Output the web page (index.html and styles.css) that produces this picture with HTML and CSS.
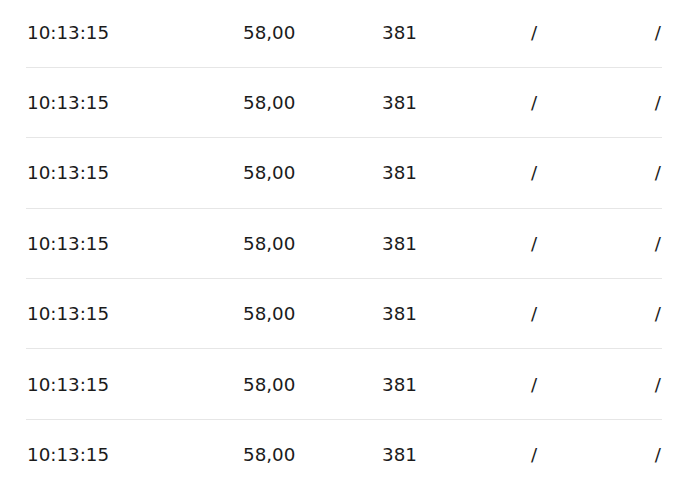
FILE: index.html
```html
<!DOCTYPE html>
<html>
<head>
<meta charset="utf-8">
<link rel="stylesheet" href="styles.css">
</head>
<body>
<div class="table">
  <div class="row"><span class="c time">10:13:15</span><span class="c price">58,00</span><span class="c qty">381</span><span class="c a">/</span><span class="c b">/</span></div>
  <div class="row"><span class="c time">10:13:15</span><span class="c price">58,00</span><span class="c qty">381</span><span class="c a">/</span><span class="c b">/</span></div>
  <div class="row"><span class="c time">10:13:15</span><span class="c price">58,00</span><span class="c qty">381</span><span class="c a">/</span><span class="c b">/</span></div>
  <div class="row"><span class="c time">10:13:15</span><span class="c price">58,00</span><span class="c qty">381</span><span class="c a">/</span><span class="c b">/</span></div>
  <div class="row"><span class="c time">10:13:15</span><span class="c price">58,00</span><span class="c qty">381</span><span class="c a">/</span><span class="c b">/</span></div>
  <div class="row"><span class="c time">10:13:15</span><span class="c price">58,00</span><span class="c qty">381</span><span class="c a">/</span><span class="c b">/</span></div>
  <div class="row"><span class="c time">10:13:15</span><span class="c price">58,00</span><span class="c qty">381</span><span class="c a">/</span><span class="c b">/</span></div>
</div>
</body>
</html>
```
FILE: styles.css
```css
html, body {
  margin: 0;
  padding: 0;
  background: #ffffff;
  overflow: hidden;
}
body {
  font-family: "DejaVu Sans", "Noto Sans", sans-serif;
  font-size: 18.3px;
  color: #1b1b1b;
}
.table {
  margin: -2.5px 27px 0 26px;
}
.row {
  display: grid;
  grid-template-columns: 216px 139px 149px 1fr auto;
  align-items: center;
  height: 69.4px;
  border-bottom: 1px solid #e6e6e6;
  padding-left: 1px;
}
.row:last-child {
  border-bottom: none;
}
.c {
  white-space: nowrap;
}
.b {
  padding-right: 1px;
}
```
